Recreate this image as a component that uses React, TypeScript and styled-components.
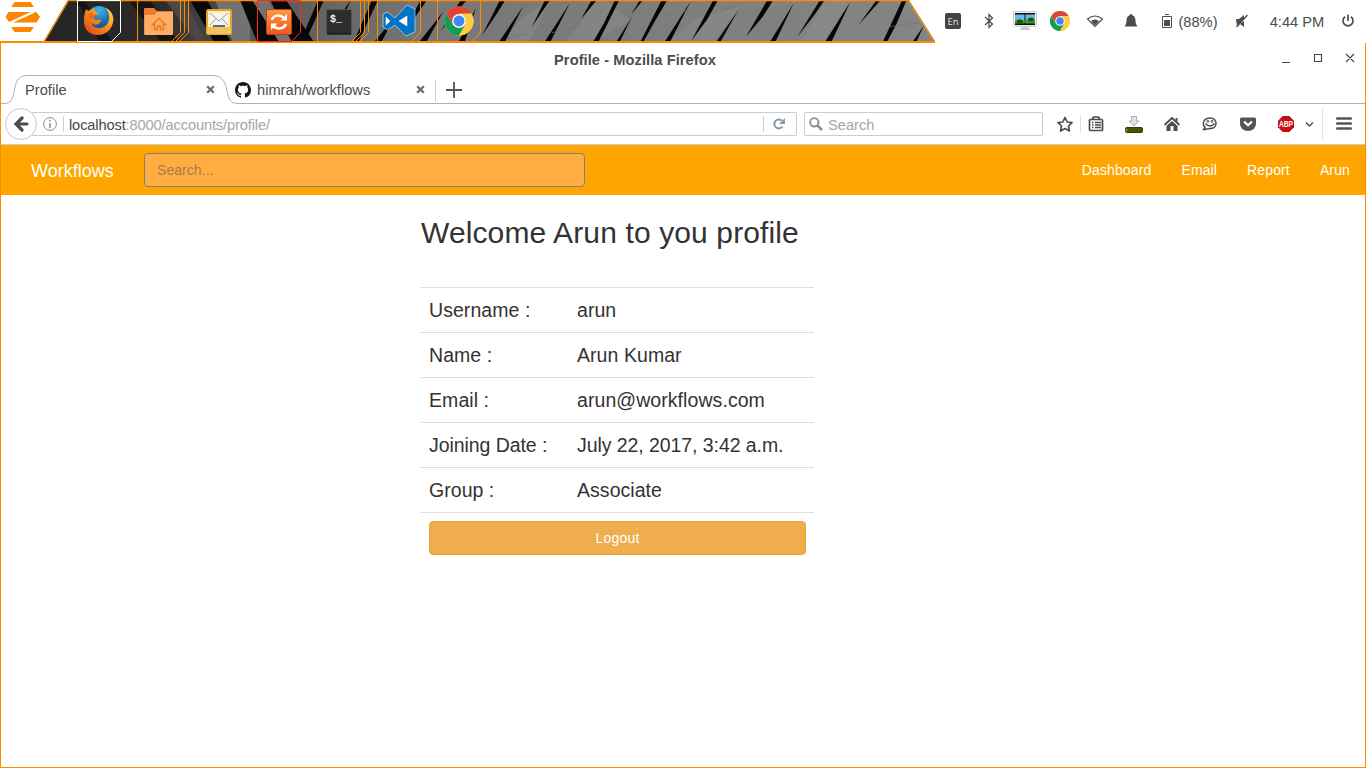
import React from "react";
import styled, { createGlobalStyle } from "styled-components";

const Global = createGlobalStyle`
  * { box-sizing: border-box; }
  body { margin: 0; background: #fff; font-family: "Liberation Sans", Arial, sans-serif; overflow: hidden; }
`;
const Desktop = styled.div`
  width: 1366px; height: 768px; display: flex; flex-direction: column; background: #fff; overflow: hidden;
`;

/* ---------- system panel ---------- */
const Panel = styled.header`
  position: relative; height: 43px; flex: none; display: flex; align-items: stretch;
`;
const Wallpaper = styled.svg`
  position: absolute; left: 0; top: 0;
`;
const MenuButton = styled.div`
  width: 77px; padding-left: 5px; position: relative;
`;
const Launchers = styled.div`
  display: flex; gap: 8px; position: relative; width: 867px;
`;
const Launcher = styled.svg`
  display: block; width: 52px; height: 43px; flex: none;
`;
const Tray = styled.div`
  display: flex; align-items: center; height: 42px; flex: 1; position: relative; color: #4c4c4c; font-size: 15px;
`;
const TrayItem = styled.div<{ $w: number; $gap?: number }>`
  width: ${(p) => p.$w}px; margin-left: ${(p) => p.$gap ?? 0}px; height: 22px; flex: none;
  display: flex; align-items: center; justify-content: center; white-space: nowrap;
  svg { display: block; }
`;
const TrayText = styled.span`
  font-size: 14.67px; padding-top: 2px;
`;
const LangBadge = styled.span`
  width: 16px; height: 16px; border-radius: 2px; background: #444; color: #ddd; font: 9.5px/17px "Noto Sans", sans-serif; text-align: center;
`;

/* ---------- browser window ---------- */
const Window = styled.main`
  flex: 1; display: flex; flex-direction: column; border: solid #ff8c00; border-width: 0 1px 1px;
`;
const TitleBar = styled.div`
  height: 32px; flex: none; display: flex; align-items: center; position: relative;
`;
const Title = styled.div`
  width: 1268px; text-align: center; font-size: 14.67px; font-weight: bold; color: #4c4c4c; line-height: 34px; padding-top: 2px; letter-spacing: .06px;
`;
const WindowButtons = styled.svg`
  width: 80px; height: 20px; margin-left: 10px; margin-top: -2px; display: block; flex: none;
`;
const TabStrip = styled.div`
  height: 29px; flex: none; position: relative; display: flex;
`;
const TabOutline = styled.svg`
  position: absolute; left: 0; top: 0;
`;
const Tab = styled.div<{ $w: number; $pad: number; $end: number }>`
  position: relative; width: ${(p) => p.$w}px; padding: 0 ${(p) => p.$end}px 0 ${(p) => p.$pad}px; height: 29px;
  display: flex; align-items: center; font-size: 14.67px; color: #4c4c4c;
  svg { display: block; flex: none; }
`;
const TabLabel = styled.span<{ $gap?: number }>`
  flex: 1; margin-left: ${(p) => p.$gap ?? 0}px; line-height: 29px; padding-top: 2px;
`;
const NavBar = styled.div`
  height: 41px; flex: none; display: flex; align-items: center; border-bottom: 1px solid #ccc; position: relative;
`;
const BackButton = styled.div`
  width: 32px; height: 32px; border: 1px solid #c8c8c8; border-radius: 50%; margin-left: 4px; background: #fff; position: relative;
  display: flex; align-items: center; justify-content: center; flex: none;
`;
const UrlBox = styled.div`
  height: 24px; width: 765px; margin-left: -5px; border: 1px solid #ccc; border-left: 0; border-radius: 0 2px 2px 0; flex: none;
  display: flex; align-items: center; padding-left: 11px; font-size: 14.67px; color: #a6a6a6;
  b { font-weight: normal; color: #484848; }
  svg { display: block; flex: none; }
`;
const Divider = styled.i<{ $h: number; $m?: string }>`
  width: 1px; height: ${(p) => p.$h}px; margin: ${(p) => p.$m ?? "0"}; background: #d0d0d0; flex: none;
`;
const UrlText = styled.span`
  flex: 1; line-height: 24px; padding-top: 2px; letter-spacing: -.14px;
`;
const SearchBox = styled.div`
  width: 239px; height: 24px; margin-left: 7px; border: 1px solid #ccc; border-radius: 2px; display: flex; align-items: center;
  padding: 0 4px; gap: 5px; color: #a6a6a6; font-size: 14.67px; flex: none;
  span { padding-top: 2px; }
`;
const Tools = styled.svg`
  display: block; flex: none; width: 322px; height: 40px;
`;

/* ---------- web page ---------- */
const SiteNav = styled.nav`
  height: 50px; flex: none; background: #ffa500; display: flex; align-items: center; color: #fff; padding: 0 15px 0 30px;
`;
const Brand = styled.a`
  font-size: 18px; width: 113px; line-height: 20px; margin-top: 1px;
`;
const SiteSearch = styled.input`
  width: 441px; height: 34px; border: 1px solid #808080; border-radius: 4px; background: #ffac40; padding: 6px 12px;
  font: 14px/20px "Liberation Sans", Arial, sans-serif; letter-spacing: .06px; outline: none;
  &::placeholder { color: #a87d48; opacity: 1; }
`;
const NavLinks = styled.div`
  margin-left: auto; display: flex; gap: 30px; font-size: 14px; line-height: 20px; letter-spacing: .13px;
`;
const Profile = styled.section`
  width: 393px; margin-left: 420px; color: #333;
`;
const Heading = styled.h2`
  margin: 20px 0 0; font-size: 30px; font-weight: 500; line-height: 33px; height: 72px; padding-top: 1px; letter-spacing: .12px;
`;
const Row = styled.div<{ $track: number }>`
  display: flex; height: 45px; border-top: 1px solid #ddd; padding: 8px; font-size: 19.5px; line-height: 29px; letter-spacing: ${(p) => p.$track}px;
`;
const Key = styled.span`
  width: 148px;
`;
const LogoutRow = styled.div`
  border-top: 1px solid #ddd; padding: 8px;
`;
const Logout = styled.button`
  display: block; width: 100%; height: 34px; border: 1px solid #eea236; border-radius: 4px; background: #f0ad4e; color: #fff; padding: 6px 12px;
  font: 14px/20px "Liberation Sans", Arial, sans-serif; letter-spacing: .2px;
`;

/* Each entry is one dark crevice of the rock wallpaper, in thirds of a pixel from x = 480. */
const crevices = [
  "60,0 76,0 46,48 5,108", "130,18 76,124 58,124", "195,0 210,0 155,82", "270,8 212,124 195,124",
  "335,0 350,0 303,58", "405,0 418,0 356,124 340,124 372,70", "480,0 489,0 453,44", "456,50 420,124 410,124",
  "545,0 562,0 518,75 491,124 482,124", "632,4 571,124 555,124", "700,0 714,0 683,56 633,124",
  "775,30 722,124 710,124", "862,0 880,0 848,50 798,110", "942,8 887,124 871,124", "1020,0 1034,0 1003,45 952,110",
  "1112,4 1055,124 1036,124", "1190,0 1202,0 1135,76", "1267,0 1280,0 1248,75 1222,124 1209,124", "1332,76 1310,124 1299,124",
];

const RockWallpaper = () => (
  <Wallpaper width="940" height="43" viewBox="0 0 940 43">
    <defs>
      <clipPath id="bar"><path d="M68 0H909L935 41H44Z" /></clipPath>
      <linearGradient id="rock" x1="0" x2="1">
        <stop offset="0" stopColor="#222" /><stop offset=".17" stopColor="#2b2b2b" /><stop offset=".26" stopColor="#555" />
        <stop offset=".45" stopColor="#777" /><stop offset="1" stopColor="#858585" />
      </linearGradient>
    </defs>
    <g clipPath="url(#bar)">
      <rect width="940" height="43" fill="url(#rock)" />
      <path d="M76 0H84L112 41H99ZM128 0H150L178 41H160Z" fill="#151515" />
      <path d="M165 0H185L206 42H196Z" fill="#484848" />
      <path d="M215 0H244L250 20V42H233ZM250 0H268L292 42H268Z" fill="#727272" />
      <path d="M190 0H207L231 42H214ZM240 0H252L279 42H257ZM270 0H286L314 42H292Z" fill="#080808" />
      <path d="M318 0L301 40H306L324 0ZM351 0L338 18L344 15ZM372 0L354 41H359L378 0ZM394 18L375 41H382ZM421 0L401 34L409 26L427 0ZM443 12L420 41H427ZM461 0L440 32L451 18L467 0ZM476 8L459 41H465Z" fill="#070707" />
      <g transform="translate(480 0) scale(.33333)">
        <path d="M130 50L60 124H150L210 0ZM450 60L380 0H350L260 124H350ZM780 20L640 60L570 124H700ZM1120 0L1040 0L960 124H1040Z" fill="#929292" opacity=".4" />
        {crevices.map((p) => <polygon key={p} points={p} fill="#060606" />)}
        <path d="M80 116L145 100M215 98L300 80M555 48L640 28M720 30L775 18M1230 80L1325 66" stroke="#727272" strokeWidth="2" />
      </g>
    </g>
    <path d="M44 42L68.500 .5H908.500L934.500 42" fill="none" stroke="#ff8c00" strokeWidth="1.300" />
  </Wallpaper>
);
const PanelEdge = styled.div`
  position: absolute; left: 0; top: 41px; width: 935px; height: 2px; background: #ff8c00;
`;

const Frame = ({ color, sides = [43] }: { color: string; sides?: number[] }) => (
  <g fill="none" stroke={color} strokeWidth="1">
    <path d={`M.5 41V.5H${sides[sides.length - 1]}`} />
    {sides.map((s) => <path key={s} d={`M${s + 0.5} .5V32.500L${s - 8.500} 41.500`} />)}
    <path d="M0 41.500H35" />
  </g>
);

const ChromeMark = ({ r }: { r: number }) => (
  <g transform={`scale(${r / 24})`}>
    <circle r="24" fill="#ffcd40" />
    <path d="M-20.800 -12A24 24 0 0 1 20.800 -12H0L-10.500 6Z" fill="#db4437" />
    <path d="M-20.800 -12A24 24 0 0 0 0 24L10.400 6H-10.400Z" fill="#0f9d58" />
    <path d="M0 -12H20.800A24 24 0 0 1 0 24L10.400 6Z" fill="#ffcd40" />
    <circle r="11.500" fill="#f4f4f4" /><circle r="9" fill="#4285f4" />
  </g>
);

const CloseMark = () => (
  <svg width="9" height="9" viewBox="0 0 9 9"><path d="M1.200 1.200L7.800 7.800M7.800 1.200L1.200 7.800" stroke="#6c6c6c" strokeWidth="2.300" /></svg>
);

const rows: [string, string, number][] = [
  ["Username :", "arun", 0.06], ["Name :", "Arun Kumar", 0.06], ["Email :", "arun@workflows.com", 0.07],
  ["Joining Date :", "July 22, 2017, 3:42 a.m.", -0.07], ["Group :", "Associate", 0.04],
];

export default function App() {
  return (
    <Desktop>
      <Global />
      <Panel>
        <RockWallpaper />
        <PanelEdge />
        <MenuButton>
          <svg width="36" height="36" viewBox="0 0 36 36" fill="#ff8500">
            <path d="M9.700 2H25.500L29 7H6.200ZM3.500 12H30.500L9 22H4L.5 17ZM31.500 12L35 17L31.500 22.500H5.500L27.500 12.500ZM6.200 27H29L25.500 32H9.700Z" />
            <path d="M29 11.700L5 22.700" stroke="#fff" strokeWidth="2.200" />
          </svg>
        </MenuButton>
        <Launchers>
          <Launcher>
            <defs>
              <radialGradient id="globe" cx=".5" cy=".15" r=".8"><stop stopColor="#39b8e8" /><stop offset="1" stopColor="#153a80" /></radialGradient>
              <linearGradient id="fox" x1="1" y1="0" x2="0" y2="1"><stop stopColor="#ffe24a" /><stop offset=".4" stopColor="#f89b1c" /><stop offset="1" stopColor="#d83b12" /></linearGradient>
            </defs>
            <Frame color="#fff" />
            <circle cx="22" cy="19" r="13" fill="url(#globe)" />
            <path d="M9 9C10 11 12 11 14 10L18 8C17 11 19 12 21 13C21 15 18 15 17 17C17 20 19 20 21 20C23 19 25 20 23 22C21 26 15 25 14 22C15 26 18 28 22 28C29 28 33 22 32 15C31 11 30 9 28 8C33 9 36 14 36.500 19C36 29 29 35 21 35C12 35 6 29 7 19C7 15 8 12 9 9Z" fill="url(#fox)" />
            <path d="M12 14L16 12L15 15L20 14L17 17L17 19L12 19Z" fill="#ee6820" />
          </Launcher>
          <Launcher>
            <Frame color="#ff8c00" sides={[43, 47, 51]} />
            <path d="M7 9Q7 8 8 8H17L20 11H36V34Q36 35 35 35H8Q7 35 7 34Z" fill="#e77d32" />
            <path d="M7.500 15H17L20 12H36V33.500Q36 35 34.500 35H9Q7.500 35 7.500 33.500Z" fill="#fead68" />
            <path d="M15.500 24.500L22 18.500L28.500 24.500H26.500V29.500H23.500V26H20.500V29.500H17.500V24.500Z" fill="none" stroke="#f07812" strokeWidth="1.500" />
          </Launcher>
          <Launcher>
            <rect x="9" y="9" width="26" height="26" rx="2.500" fill="#dfa62f" /><rect x="11" y="11" width="22" height="16" fill="#fff0ad" />
            <rect x="10" y="27" width="24" height="7" rx="1.500" fill="#efc45b" />
            <path d="M13 13H31V25H13Z" fill="#f5f5f5" /><path d="M13 13L22 21L31 13M13 25L19 19M31 25L25 19" fill="none" stroke="#999" />
            <path d="M16 25H28V27H16Z" fill="#626777" />
          </Launcher>
          <Launcher>
            <Frame color="#ff2418" />
            <defs><linearGradient id="upd" y2="1" x2="0"><stop stopColor="#ff9b42" /><stop offset="1" stopColor="#ed5423" /></linearGradient></defs>
            <rect x="9.500" y="9.500" width="25" height="25" rx="1.500" fill="url(#upd)" stroke="#be3e13" />
            <path d="M15 20C16 15 23 14 27 18M29 24C27 29 20 30 16 26" fill="none" stroke="#fff" strokeWidth="2.500" /><path d="M30 14V20.500H23.500ZM14 30V23.500H20.500Z" fill="#fff" />
          </Launcher>
          <Launcher>
            <Frame color="#ff8c00" sides={[43, 47, 51]} />
            <rect x="9.500" y="9.500" width="25" height="25" rx="1.500" fill="#2d2d2d" stroke="#555" /><path d="M10 34H34" stroke="#111" />
            <text x="13" y="22" fill="#fff" fontFamily="Liberation Mono, monospace" fontSize="10" fontWeight="bold">$_</text>
          </Launcher>
          <Launcher>
            <Frame color="#ff8c00" />
            <path fillRule="evenodd" d="M6 14L10.500 12L18 18L30 5L38 9V32L29 36L18 25L10.500 30L6 27ZM9 17V25L13 21ZM22 21L30 26V16Z" fill="#0075c5" stroke="#c8dce8" strokeWidth=".7" /><path d="M9 17L13 21L9 25ZM30 16L22 21L30 26Z" fill="#fff" />
          </Launcher>
          <Launcher><Frame color="#ff8c00" /><g transform="translate(22 21)"><ChromeMark r={14.5} /></g></Launcher>
        </Launchers>
        <Tray>
          <TrayItem $w={18}><LangBadge>En</LangBadge></TrayItem>
          <TrayItem $w={18} $gap={18}><svg width="14" height="18" viewBox="0 0 14 18"><path d="M3 5L10.500 12L7 15.500V2.500L10.500 6L3 13" fill="none" stroke="#4c4c4c" strokeWidth="1.300" /></svg></TrayItem>
          <TrayItem $w={24} $gap={15}>
            <svg width="24" height="20" viewBox="0 0 24 20"><rect x=".5" y=".5" width="23" height="15" rx="1" fill="#eee" stroke="#ccc" /><rect x="2" y="2" width="20" height="12" fill="#111" /><path d="M2 3.500H11.500V12H2ZM12.500 3.500H22V12H12.500Z" fill="#6db9ec" /><path d="M2 12.500V9.500L6 8L11.500 10V12.500ZM12.500 12.500V9L17 7L22 9V12.500Z" fill="#3f9d1c" /><ellipse cx="7" cy="10.500" rx="3" ry="2" fill="#17550c" /><ellipse cx="18" cy="8.500" rx="3" ry="2" fill="#17550c" /><path d="M9 16H15L18 19H6Z" fill="#ccc" /></svg>
          </TrayItem>
          <TrayItem $w={22} $gap={12}><svg width="20" height="20" viewBox="-10 -10 20 20"><ChromeMark r={10} /></svg></TrayItem>
          <TrayItem $w={18} $gap={15}><svg width="18" height="14" viewBox="0 0 18 14"><path d="M1.500 5Q9 -1 16.500 5L9 12.500Z" fill="none" stroke="#4c4c4c" strokeWidth="1.100" /><path d="M5 7Q9 4 13 7L9 11.500Z" fill="#4c4c4c" /></svg></TrayItem>
          <TrayItem $w={18} $gap={18}><svg width="14" height="16" viewBox="0 0 14 16"><path d="M7 1Q8.500 1 8.500 2.500Q11.500 3 11.500 8Q11.500 11 13 12.500V13.500H1V12.500Q2.500 11 2.500 8Q2.500 3 5.500 2.500Q5.500 1 7 1Z" fill="#4c4c4c" /></svg></TrayItem>
          <TrayItem $w={12} $gap={21}><svg width="10" height="14" viewBox="0 0 10 14"><path d="M.5 2.500H9.500V13.500H.5ZM3 .5H7" fill="none" stroke="#4c4c4c" /><path d="M2 6H8V12H2Z" fill="#4c4c4c" /></svg></TrayItem>
          <TrayItem $w={40} $gap={5}><TrayText>(88%)</TrayText></TrayItem>
          <TrayItem $w={16} $gap={16}><svg width="14" height="14" viewBox="0 0 14 14"><path d="M1 5H4L9 1V5L2 12M5 10L9 13V7Z" fill="#4c4c4c" /><path d="M1.500 13L12.500 1" stroke="#4c4c4c" strokeWidth="1.300" /></svg></TrayItem>
          <TrayItem $w={56} $gap={19}><TrayText>4:44 PM</TrayText></TrayItem>
          <TrayItem $w={14} $gap={16}><svg width="14" height="14" viewBox="0 0 14 14"><path d="M4 2.800A5 5 0 1 0 10 2.800M7 .5V7" fill="none" stroke="#4c4c4c" strokeWidth="1.700" /></svg></TrayItem>
        </Tray>
      </Panel>

      <Window>
        <TitleBar>
          <Title>Profile - Mozilla Firefox</Title>
          <WindowButtons viewBox="0 0 80 20"><path d="M3 14.500H11M35.500 6.500H42.500V13.500H35.500ZM67 6L75 14M75 6L67 14" fill="none" stroke="#444" strokeWidth="1.100" /></WindowButtons>
        </TitleBar>
        <TabStrip>
          <TabOutline width="1364" height="29"><path d="M0 28.500H3C10 28.500 11 25 13 17C15 7 16 .5 27 .5H211C221 .5 224 6 226 16C228 25 229 28.500 238 28.500H1364" fill="none" stroke="#b0b0b4" /><path d="M434.500 5V26" stroke="#d0d0d0" /></TabOutline>
          <Tab $w={228} $pad={24} $end={14}><TabLabel>Profile</TabLabel><CloseMark /></Tab>
          <Tab $w={206} $pad={6} $end={10}>
            <svg width="16" height="16" viewBox="0 0 16 16"><path fill="#181616" d="M8 0C3.580 0 0 3.580 0 8c0 3.540 2.290 6.530 5.470 7.590.4.070.55-.17.55-.38 0-.19-.01-.82-.01-1.490-2.010.37-2.530-.49-2.690-.94-.09-.23-.48-.94-.82-1.130-.28-.15-.68-.52-.01-.53.63-.01 1.080.58 1.230.82.720 1.210 1.870.87 2.330.66.070-.52.280-.87.510-1.070-1.780-.2-3.640-.89-3.640-3.950 0-.87.310-1.590.82-2.150-.08-.2-.36-1.020.08-2.120 0 0 .67-.21 2.200.82.640-.18 1.320-.27 2-.27s1.360.09 2 .27c1.530-1.040 2.200-.82 2.200-.82.440 1.100.16 1.920.08 2.120.51.560.82 1.270.82 2.150 0 3.070-1.870 3.750-3.650 3.950.290.25.54.73.54 1.480 0 1.070-.01 1.930-.01 2.200 0 .21.15.46.55.38A8.010 8.010 0 0 0 16 8c0-4.420-3.580-8-8-8z" /></svg>
            <TabLabel $gap={6}>himrah/workflows</TabLabel>
            <CloseMark />
          </Tab>
          <Tab $w={40} $pad={10} $end={10}><svg width="18" height="18" viewBox="0 0 18 18"><path d="M1 9H17M9 1V17" stroke="#555" strokeWidth="1.800" /></svg></Tab>
        </TabStrip>
        <NavBar>
          <BackButton><svg width="16" height="16" viewBox="0 0 16 16"><path d="M14 8H4M9 2L3 8L9 14" fill="none" stroke="#4c4c4c" strokeWidth="3.200" strokeLinecap="round" /></svg></BackButton>
          <UrlBox>
            <svg width="14" height="14" viewBox="0 0 14 14"><circle cx="7" cy="7" r="6.400" fill="none" stroke="#8c8c8c" /><path d="M7 3V4.500M7 6V11" stroke="#8c8c8c" strokeWidth="1.500" /></svg>
            <Divider $h={16} $m="0 5px 0 6px" />
            <UrlText><b>localhost</b>:8000/accounts/profile/</UrlText>
            <Divider $h={16} />
            <svg width="32" height="22" viewBox="0 0 32 22"><path d="M18.500 13.500A4.500 4.500 0 1 1 18 7.700" fill="none" stroke="#8c99a5" strokeWidth="2" /><path d="M21 5V11H15Z" fill="#8c99a5" /></svg>
          </UrlBox>
          <SearchBox>
            <svg width="14" height="14" viewBox="0 0 14 14"><circle cx="5.300" cy="5.300" r="4.200" fill="none" stroke="#8e8e8e" strokeWidth="1.900" /><path d="M8.300 8.300L13 13" stroke="#8e8e8e" strokeWidth="2.600" /></svg>
            <span>Search</span>
          </SearchBox>
          <Tools viewBox="1043 104 322 40" fill="none" stroke="#4c4c4c">
            <path d="M1065 117.500L1067.200 122L1072 122.700L1068.500 126L1069.400 131L1065 128.600L1060.600 131L1061.500 126L1058 122.700L1062.800 122Z" strokeWidth="1.700" strokeLinejoin="round" />
            <path d="M1080.500 115V133" stroke="#ddd" /><path d="M1322.500 108V140" stroke="#e4e4e4" />
            <path d="M1090.500 119.500H1101.500Q1102.500 119.500 1102.500 120.500V129.500Q1102.500 130.500 1101.500 130.500H1090.500Q1089.500 130.500 1089.500 129.500V120.500Q1089.500 119.500 1090.500 119.500ZM1092 118.500L1094 117H1098L1100 118.500" strokeWidth="1.700" />
            <path d="M1092 122.500H1093.500M1095 122.500H1101M1092 125H1093.500M1095 125H1101M1092 127.500H1093.500M1095 127.500H1101" strokeWidth="1.300" />
            <path d="M1131.500 116.500H1136.500V121H1139L1134 126L1129 121H1131.500Z" fill="#dde2e2" stroke="#9da2a2" strokeWidth=".8" />
            <rect x="1125.500" y="127.500" width="17" height="5" rx="1" fill="#485200" stroke="#333e00" /><path d="M1126.500 129V131.500" stroke="#83a33a" strokeWidth="1.500" />
            <path d="M1164.500 125L1172 118L1179.500 125" strokeWidth="1.800" /><path d="M1166.500 126L1172 121L1177.500 126V131H1173.500V126H1170.500V131H1166.500ZM1175.500 118H1177.500V122L1175.500 120Z" fill="#4c4c4c" stroke="none" />
            <path d="M1203.500 129.500L1205 127.300C1201.500 123.500 1204 118 1210 118C1218 118 1218 128.500 1210 128.500C1207.500 128.500 1206 129.500 1203.500 129.500Z" strokeWidth="1.500" /><path d="M1205.500 123.500Q1210 128.500 1214.500 123.500" strokeWidth="1.500" /><circle cx="1207.800" cy="121.300" r="1" strokeWidth="1" /><circle cx="1212" cy="121.300" r="1" strokeWidth="1" />
            <path d="M1241.500 117.500H1254.500Q1256 117.500 1256 119V123.500C1256 128 1252.500 131 1248 131C1243.500 131 1240 128 1240 123.500V119Q1240 117.500 1241.500 117.500Z" fill="#555" stroke="none" /><path d="M1244 121.500L1248 125.300L1252 121.500" stroke="#fff" strokeWidth="2.200" />
            <path d="M1282.700 116H1289.300L1294 120.700V127.300L1289.300 132H1282.700L1278 127.300V120.700Z" fill="#c70d10" stroke="none" /><text x="1286" y="127" textAnchor="middle" textLength="14" lengthAdjust="spacingAndGlyphs" fontSize="8.500" fontWeight="bold" fill="#fff" stroke="none" fontFamily="Liberation Sans, sans-serif">ABP</text>
            <path d="M1306 122.500L1309.500 126L1313 122.500" strokeWidth="1.400" />
            <path d="M1337.300 118.500H1350.700M1337.300 123.500H1350.700M1337.300 128.500H1350.700" stroke="#555" strokeWidth="2.700" strokeLinecap="round" />
          </Tools>
        </NavBar>

        <SiteNav>
          <Brand>Workflows</Brand>
          <SiteSearch placeholder="Search..." />
          <NavLinks><a>Dashboard</a><a>Email</a><a>Report</a><a>Arun</a></NavLinks>
        </SiteNav>
        <Profile>
          <Heading>Welcome Arun to you profile</Heading>
          {rows.map(([k, v, track]) => <Row key={k} $track={track}><Key>{k}</Key><span>{v}</span></Row>)}
          <LogoutRow><Logout>Logout</Logout></LogoutRow>
        </Profile>
      </Window>
    </Desktop>
  );
}
